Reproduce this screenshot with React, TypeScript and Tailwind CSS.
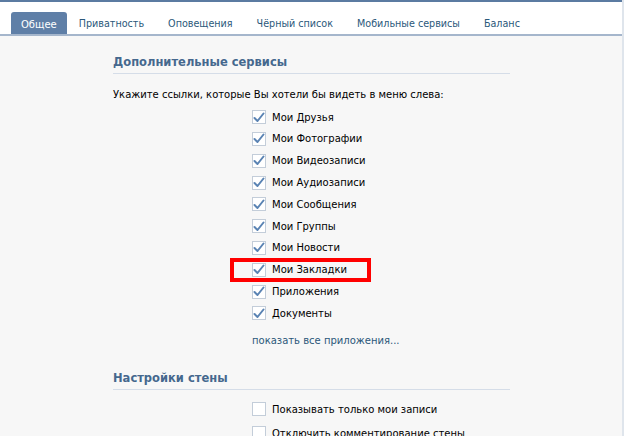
const tabs = ["Общее", "Приватность", "Оповещения", "Чёрный список", "Мобильные сервисы", "Баланс"];

const services = [
  "Мои Друзья",
  "Мои Фотографии",
  "Мои Видеозаписи",
  "Мои Аудиозаписи",
  "Мои Сообщения",
  "Мои Группы",
  "Мои Новости",
  "Мои Закладки",
  "Приложения",
  "Документы",
];

function Check({ checked }: { checked: boolean }) {
  return (
    <span className="flex h-[14px] w-[14px] shrink-0 items-center justify-center border border-[#c3cdd9] bg-white">
      {checked && (
        <svg width="12" height="11" viewBox="0 0 12 11">
          <path d="M1.5 6 L4.5 9 L10.5 1.5" fill="none" stroke="#5a83b3" strokeWidth="2" strokeLinecap="round" strokeLinejoin="round" />
        </svg>
      )}
    </span>
  );
}

function Row({ label, checked, marked }: { label: string; checked: boolean; marked?: boolean }) {
  return (
    <div className="relative flex h-[21.8px] items-center gap-[6px] pl-[252px]">
      <Check checked={checked} />
      <span className="whitespace-nowrap text-[10px] text-black">{label}</span>
      {marked && (
        <div className="pointer-events-none absolute left-[230px] top-[-1px] h-[24px] w-[141px] border-4 border-[#ff0000]" />
      )}
    </div>
  );
}

function Heading({ children }: { children: string }) {
  return (
    <div className="pl-[113px]">
      <div className="w-[397px] border-b border-[#d5dde8] pb-[2px] text-[11.5px] font-bold text-[#45688e]">{children}</div>
    </div>
  );
}

export default function App() {
  return (
    <div className="h-[436px] w-[624px] overflow-hidden bg-[#f7f7f7] font-['Tahoma','DejaVu_Sans',sans-serif]">
      <div className="h-full border-r-2 border-[#dfe5ec]">
        <div className="border-t-2 border-[#5b7ba1] bg-white">
          <div className="flex h-[32px] items-end pl-[11px] text-[9.6px]">
            {tabs.map((t, i) =>
              i === 0 ? (
                <div key={t} className="flex h-[22px] items-center rounded-t-[3px] bg-[#5f7fa7] px-[10px] pt-[2px] text-[10px] text-white">
                  {t}
                </div>
              ) : (
                <div key={t} className="flex h-[22px] items-center px-[12px] pt-[2px] text-[#2b587a]">
                  {t}
                </div>
              )
            )}
          </div>
        </div>
        <div className="h-[2px] bg-[#a5b6cc]" />

        <div className="pt-[18px]">
          <Heading>Дополнительные сервисы</Heading>
          <div className="pl-[113px] pt-[13px] text-[10px] text-black">
            Укажите ссылки, которые Вы хотели бы видеть в меню слева:
          </div>
          <div className="pt-[4px]">
            {services.map((s) => (
              <Row key={s} label={s} checked marked={s === "Мои Закладки"} />
            ))}
          </div>
          <div className="pl-[252px] pt-[9px] text-[10px] text-[#2b587a]">показать все приложения...</div>

          <div className="pt-[22px]">
            <Heading>Настройки стены</Heading>
          </div>
          <div className="pt-[8px]">
            <Row label="Показывать только мои записи" checked={false} />
            <div className="h-[2px]" />
            <Row label="Отключить комментирование стены" checked={false} />
          </div>
        </div>
      </div>
    </div>
  );
}
